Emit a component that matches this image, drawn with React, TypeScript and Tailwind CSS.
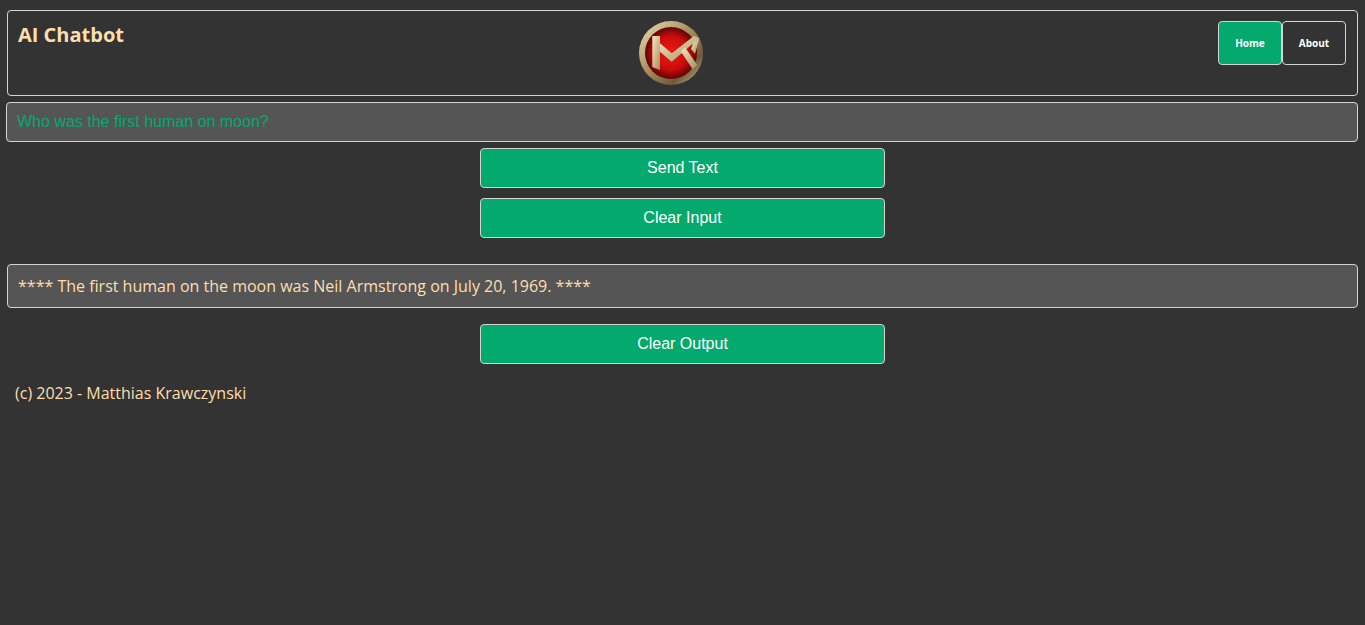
const Logo = () => {
  return (
    <svg width="64" height="64" viewBox="0 0 64 64">
      <defs>
        <radialGradient id="red" cx="50%" cy="50%" r="50%">
          <stop offset="0%" stopColor="#f01a14" />
          <stop offset="65%" stopColor="#c90c0a" />
          <stop offset="100%" stopColor="#5e0504" />
        </radialGradient>
        <linearGradient id="gold" x1="0" y1="0" x2="1" y2="1">
          <stop offset="0%" stopColor="#efe0b4" />
          <stop offset="45%" stopColor="#a98f5f" />
          <stop offset="75%" stopColor="#6f5a38" />
          <stop offset="100%" stopColor="#d8c594" />
        </linearGradient>
        <linearGradient id="bar" x1="0" y1="0" x2="1" y2="1">
          <stop offset="0%" stopColor="#f4e8c4" />
          <stop offset="100%" stopColor="#a88c5a" />
        </linearGradient>
      </defs>
      <circle cx="32" cy="32" r="32" fill="url(#gold)" />
      <circle cx="32" cy="32" r="26" fill="url(#red)" />
      <polygon points="13.3,15 21,15 21,49 13.3,46" fill="url(#bar)" />
      <polygon points="21,22.3 32.7,32.3 55,15 60.3,17.3 32.7,40.7 21,30.7" fill="url(#bar)" />
      <polygon points="60.3,17.3 56,33 52,28 54,22" fill="url(#bar)" />
      <polygon points="42,30.7 46,26.3 58.3,44 53.7,48.3" fill="url(#bar)" />
    </svg>
  )
}

const App = () => {
  return (
    <div className="min-h-[625px] bg-[#333333] pt-2.5 font-['Open_Sans',sans-serif]">
      <header className="mx-[7px] h-[86px] border border-[#d4d4d4] rounded flex justify-between pt-2.5 pl-2.5 pr-[11px]">
        <h1 className="w-[200px] text-xl font-bold leading-[27px] text-[#ffdead]">AI Chatbot</h1>
        <Logo />
        <nav className="w-[223px] flex justify-end">
          <a className="w-16 h-11 flex items-center justify-center bg-[#04a96d] border border-[#d4d4d4] rounded text-white text-[10px] font-bold">Home</a>
          <a className="w-16 h-11 flex items-center justify-center border border-[#d4d4d4] rounded text-white text-[10px] font-bold">About</a>
        </nav>
      </header>
      <input
        readOnly
        value="Who was the first human on moon?"
        className="block mx-1.5 mt-1.5 w-[1352px] h-10 px-2.5 bg-[#555555] border border-[#d4d4d4] rounded text-base text-[#04a96d] font-['Liberation_Sans',sans-serif] outline-none"
      />
      <div className="flex flex-col items-center gap-2.5 mt-1.5">
        <button className="w-[405px] h-10 bg-[#04a96d] border border-[#d4d4d4] rounded text-white text-base font-['Liberation_Sans',sans-serif]">Send Text</button>
        <button className="w-[405px] h-10 bg-[#04a96d] border border-[#d4d4d4] rounded text-white text-base font-['Liberation_Sans',sans-serif]">Clear Input</button>
      </div>
      <div className="mx-[7px] mt-[26px] h-11 flex items-center px-2.5 bg-[#555555] border border-[#d4d4d4] rounded text-base text-[#ffdead]">
        **** The first human on the moon was Neil Armstrong on July 20, 1969. ****
      </div>
      <div className="flex justify-center mt-4">
        <button className="w-[405px] h-10 bg-[#04a96d] border border-[#d4d4d4] rounded text-white text-base font-['Liberation_Sans',sans-serif]">Clear Output</button>
      </div>
      <p className="pl-[15px] mt-4 text-base leading-[26px] text-[#ffdead]">(c) 2023 - Matthias Krawczynski</p>
    </div>
  )
}

export default App
